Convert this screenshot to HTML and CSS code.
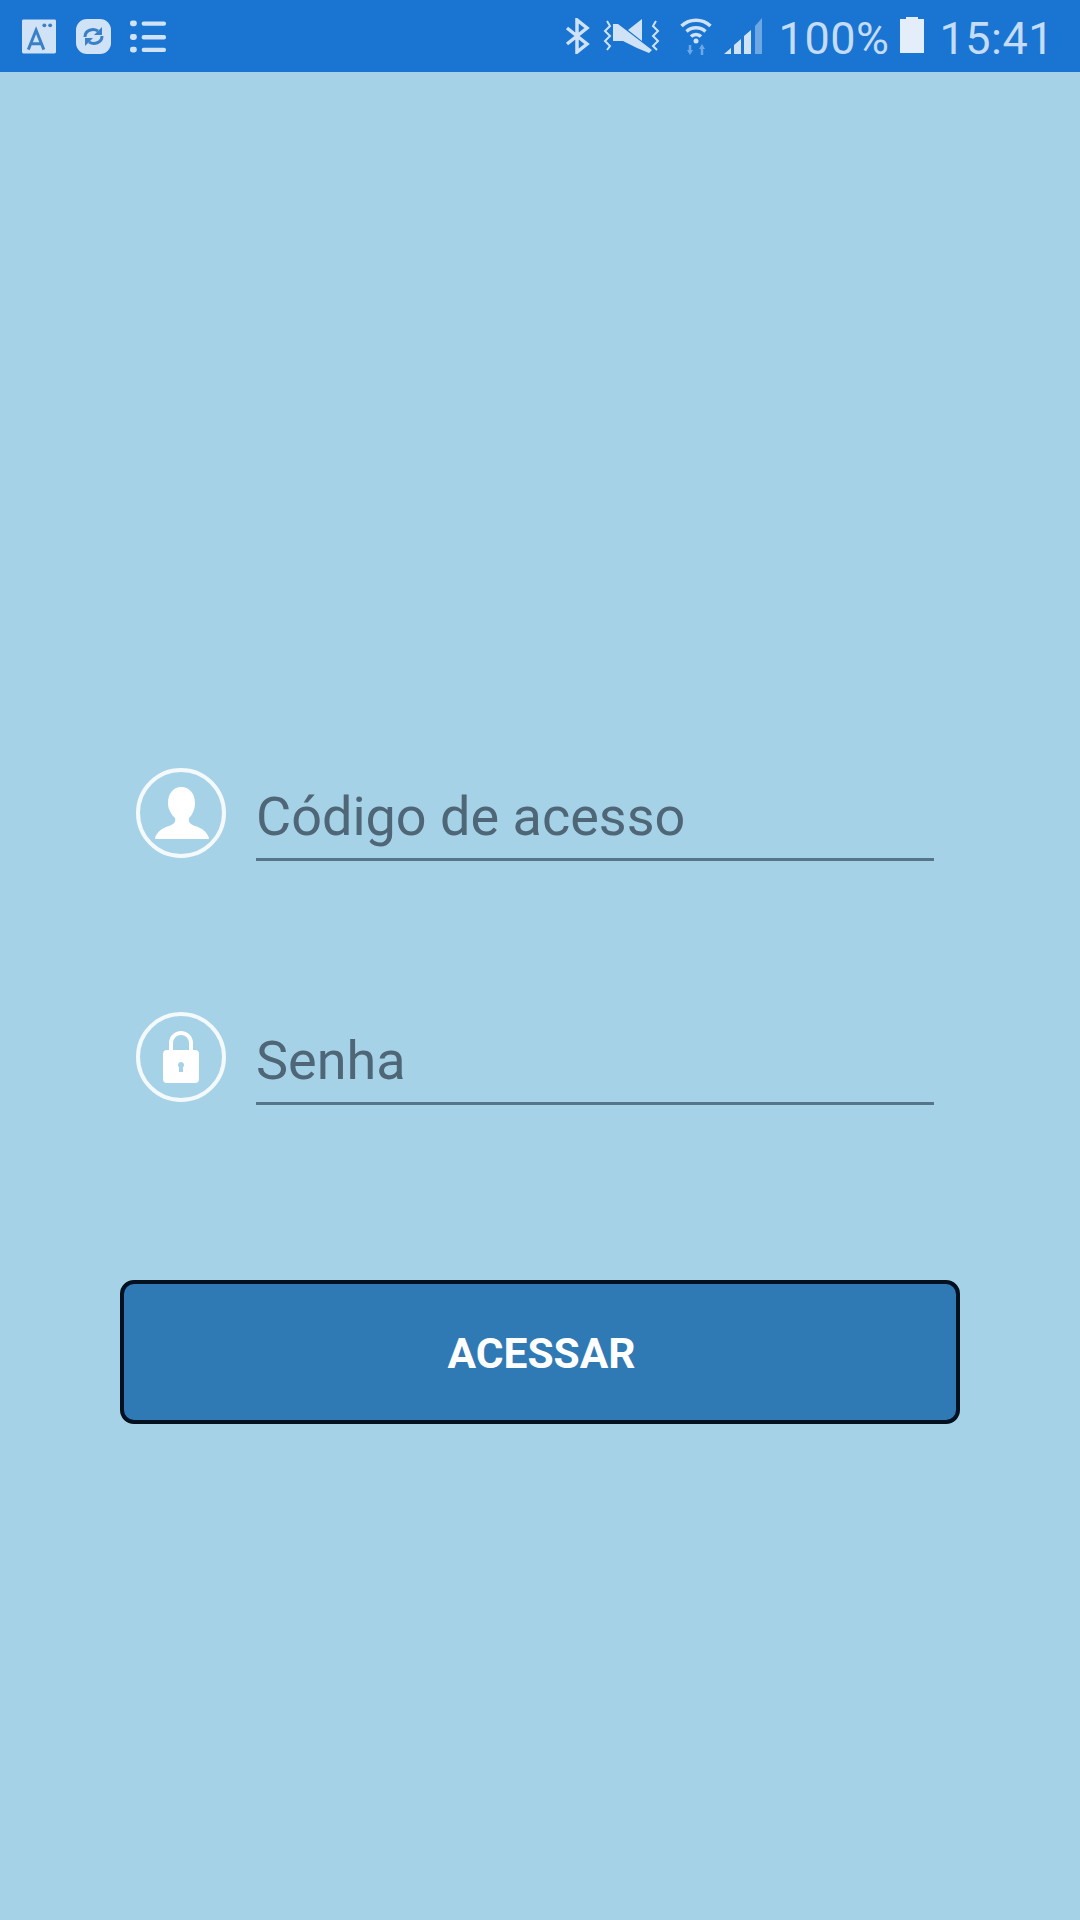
FILE: index.html
```html
<!DOCTYPE html>
<html lang="en">
<head>
    <meta charset="UTF-8">
    <meta name="viewport" content="width=device-width, initial-scale=1.0">
    <title>Login</title>
    <link rel="stylesheet" href="styles.css">
</head>
<body>
    <header class="status-bar">
        <div class="status-left">
            <svg class="icon-a" viewBox="0 0 35 35"><rect class="light" width="35" height="35" rx="1.500"/><path class="stroke-cut" d="M6.500 31L14.500 11l8 20M9.500 25h10"/><circle class="cut" cx="23" cy="6" r="2"/><circle class="cut" cx="29" cy="6" r="2"/></svg>
            <svg class="icon-sync" viewBox="0 0 35 35"><rect class="light" width="35" height="35" rx="11"/><path class="stroke-cut" d="M9 18c0-7 8-9 13-6M26 17c0 7-8 9-13 6"/><path class="cut" d="M26 8v8h-8zM9 27v-8h8z"/></svg>
            <svg class="icon-list" viewBox="0 0 37 33"><g class="light"><rect y="0" width="7" height="6" rx="2.500"/><rect x="12" y="1" width="25" height="4.500" rx="2"/><rect y="14" width="7" height="6" rx="2.500"/><rect x="12" y="15" width="25" height="4.500" rx="2"/><rect y="27" width="7" height="6" rx="2.500"/><rect x="12" y="28" width="25" height="4.500" rx="2"/></g></svg>
        </div>
        <div class="status-right">
            <svg class="icon-bt" viewBox="0 0 25 36"><path class="stroke-light" d="M2 10l20 16-10 8V2l10 8L2 26"/></svg>
            <svg class="icon-mute" viewBox="0 0 58 34"><path class="light" d="M39 0v22L25 11zM10 5h5l34 26-3 3-12-5-14-7h-10z"/><path class="stroke-wave" d="M4 2l3 5-5 5 5 5-5 5 5 5-3 4M53 2l-3 5 5 5-5 5 5 5-5 5 4 4"/></svg>
            <svg class="icon-wifi" viewBox="0 0 32 38"><path class="stroke-light" d="M1.500 9a21 21 0 0 1 29 0M6.500 14.500a14 14 0 0 1 19 0M11 19.500a7 7 0 0 1 10 0"/><circle class="light" cx="16" cy="24" r="2.500"/><path class="stroke-dim" d="M10 28v6M22 31v7"/><path class="dim" d="M7 33h6l-3 5zM19 32l3-5 3 5z"/></svg>
            <svg class="icon-signal" viewBox="0 0 38 36"><path class="light" d="M0 36l7-6v6zM10 36V27l7-6v15zM20 36V18l7-6v24z"/><path class="dim" d="M31 36V8l7-8v36z"/></svg>
            <span class="status-text">100%</span>
            <svg class="icon-battery" viewBox="0 0 24 36"><path class="bright" d="M6 0h12v2h6v34H0V2h6z"/></svg>
            <span class="status-text status-time">15:41</span>
        </div>
    </header>

    <main class="login">
        <div class="field">
            <svg class="field-icon" viewBox="0 0 90 90"><circle class="ring" cx="45" cy="45" r="43"/><path class="fill" d="M45 19c9 0 14 7 14 16 0 7-3 12-6 15-1 4 1 6 6 8 7 2 12 6 14 12 0 1-1 1-2 1H21c-1 0-2 0-2-1 2-6 7-10 14-12 5-2 7-4 6-8-3-3-7-8-7-15 0-9 5-16 13-16z"/></svg>
            <div class="field-input">Código de acesso</div>
        </div>
        <div class="field">
            <svg class="field-icon" viewBox="0 0 90 90"><circle class="ring" cx="45" cy="45" r="43"/><path class="lock-arc" d="M35 40V31a10 10 0 0 1 20 0v9"/><path class="fill" d="M31 38h28a4 4 0 0 1 4 4v25a4 4 0 0 1-4 4H31a4 4 0 0 1-4-4V42a4 4 0 0 1 4-4z"/><path class="keyhole" d="M45 50a3 3 0 0 1 2 5.300V60h-4v-4.700A3 3 0 0 1 45 50z"/></svg>
            <div class="field-input">Senha</div>
        </div>
        <button class="btn-access">ACESSAR</button>
    </main>
</body>
</html>
```

FILE: styles.css
```css
html, body {
    margin: 0;
    padding: 0;
}

body {
    width: 1080px;
    height: 1920px;
    background-color: #a6d2e8;
    font-family: Roboto, "Liberation Sans", sans-serif;
    overflow: hidden;
}

.status-bar {
    height: 72px;
    background-color: #1a74d2;
    display: flex;
    justify-content: space-between;
    align-items: center;
    padding: 0 26px 0 22px;
    box-sizing: border-box;
}

.status-left,
.status-right {
    display: flex;
    align-items: center;
}

.status-bar svg {
    display: block;
    flex: none;
}

.light { fill: #cfe2f6; }
.bright { fill: #e4eefa; }
.dim { fill: #6ea8e2; }
.cut { fill: #3a80c8; }
.stroke-cut { fill: none; stroke: #3a80c8; stroke-width: 3; }
.stroke-light { fill: none; stroke: #cfe2f6; stroke-width: 3.500; }
.stroke-dim { fill: none; stroke: #6ea8e2; stroke-width: 2.500; }
.stroke-wave { fill: none; stroke: #cfe2f6; stroke-width: 2; }

.icon-a { width: 34px; height: 35px; margin-right: 20px; }
.icon-sync { width: 35px; height: 35px; margin-right: 19px; }
.icon-list { width: 36px; height: 33px; }

.icon-bt { width: 25px; height: 36px; margin-right: 13px; }
.icon-mute { width: 58px; height: 34px; margin-right: 19px; }
.icon-wifi { width: 32px; height: 38px; margin-right: 12px; }
.icon-signal { width: 38px; height: 36px; margin-right: 17px; }
.icon-battery { width: 24px; height: 36px; margin: 0 15px 3px 11px; }

.status-text {
    font-size: 45px;
    line-height: 72px;
    padding-top: 5px;
    color: #c4dcf5;
    letter-spacing: 0.5px;
}

.login {
    display: flex;
    flex-direction: column;
    padding: 696px 120px 0;
}

.field {
    display: flex;
    align-items: flex-start;
    gap: 30px;
    height: 93px;
    margin: 0 26px 151px 16px;
}

.field:nth-child(2) {
    margin-bottom: 175px;
}

.field-icon {
    width: 90px;
    height: 90px;
    flex: none;
}

.ring {
    fill: none;
    stroke: #f4f9fc;
    stroke-width: 4;
}

.fill { fill: #fff; }
.keyhole { fill: #a6d2e8; }

.lock-arc {
    fill: none;
    stroke: #fff;
    stroke-width: 4;
}

.field-input {
    flex: 1;
    height: 93px;
    box-sizing: border-box;
    border-bottom: 3px solid #56758a;
    font-size: 54px;
    line-height: 98px;
    color: #4e6676;
}

.btn-access {
    width: 840px;
    height: 144px;
    box-sizing: border-box;
    background-color: #2f79b5;
    border: 4px solid #03101f;
    border-radius: 14px;
    color: #fff;
    font-family: inherit;
    font-size: 42.500px;
    font-weight: 700;
    padding: 3px 0 0 3px;
}
```
